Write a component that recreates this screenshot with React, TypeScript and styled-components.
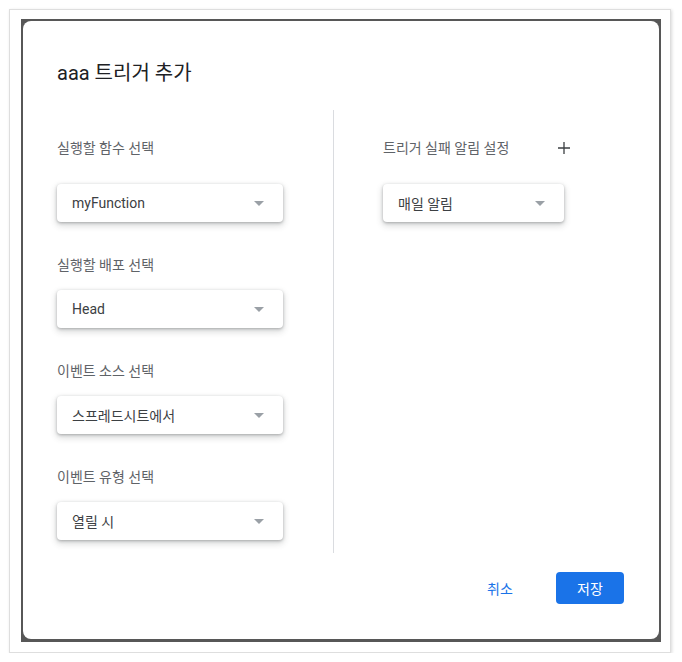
import React from 'react';
import styled, { createGlobalStyle } from 'styled-components';

const GlobalStyle = createGlobalStyle`
  body {
    margin: 0;
    background: #ffffff;
    font-family: Roboto, "Noto Sans CJK KR", sans-serif;
  }
`;

const Frame = styled.div`
  box-sizing: border-box;
  margin: 9px 0 0 9px;
  width: 662px;
  height: 644px;
  border: 1px solid #dedede;
  box-shadow: 1px 1px 3px rgba(0, 0, 0, 0.15);
  padding: 9px 9px 10px 11px;
`;

const Backdrop = styled.div`
  box-sizing: border-box;
  width: 640px;
  height: 623px;
  background: #575757;
  padding: 2px 2px 3px 2px;
`;

const Dialog = styled.div`
  box-sizing: border-box;
  height: 100%;
  background: #ffffff;
  border-radius: 8px;
  display: flex;
  flex-direction: column;
`;

const Title = styled.h1`
  margin: 0;
  padding: 40px 34px 0;
  font-size: 20px;
  line-height: 24px;
  font-weight: 400;
  color: #202124;
  font-family: Roboto, "Noto Sans CJK KR", sans-serif;
`;

const Body = styled.div`
  display: flex;
  margin-top: 25px;
  height: 443px;
`;

const LeftCol = styled.div`
  width: 276px;
  padding-left: 34px;
  padding-top: 28px;
  border-right: 1px solid #dadce0;
  display: flex;
  flex-direction: column;
`;

const RightCol = styled.div`
  padding-left: 49px;
  padding-top: 28px;
  display: flex;
  flex-direction: column;
`;

const Field = styled.div<{ $first?: boolean }>`
  display: flex;
  flex-direction: column;
  gap: ${(p) => (p.$first ? '26px' : '15px')};
  margin-top: ${(p) => (p.$first ? '0' : '33px')};
`;

const LabelRow = styled.div`
  display: flex;
  align-items: center;
  width: 188px;
  justify-content: space-between;
`;

const Label = styled.div`
  font-size: 14px;
  line-height: 20px;
  color: #5f6368;
  font-family: Roboto, "Noto Sans CJK KR", sans-serif;
`;

const Select = styled.div<{ $width: number }>`
  box-sizing: border-box;
  width: ${(p) => p.$width}px;
  height: 38px;
  border-radius: 4px;
  background: #fff;
  box-shadow: 0 1px 3px rgba(60, 64, 67, 0.35), 0 3px 6px 1px rgba(60, 64, 67, 0.18);
  display: flex;
  align-items: center;
  justify-content: space-between;
  padding: 0 19px 0 15px;
  font-size: 14px;
  color: #3c4043;
`;

const Caret = styled.span`
  width: 0;
  height: 0;
  border-left: 5px solid transparent;
  border-right: 5px solid transparent;
  border-top: 5px solid #9aa0a6;
`;

const Footer = styled.div`
  display: flex;
  justify-content: flex-end;
  gap: 22px;
  padding: 19px 35px 0 0;
`;

const Button = styled.button<{ $primary?: boolean }>`
  width: 68px;
  height: 32px;
  border: none;
  border-radius: 4px;
  font-family: Roboto, "Noto Sans CJK KR", sans-serif;
  font-size: 14px;
  font-weight: 400;
  cursor: pointer;
  background: ${(p) => (p.$primary ? '#1a73e8' : 'transparent')};
  color: ${(p) => (p.$primary ? '#ffffff' : '#1a73e8')};
`;

const PlusIcon = () => (
  <svg width="14" height="14" viewBox="0 0 14 14">
    <path d="M7 1v12M1 7h12" stroke="#3c4043" strokeWidth="1.3" fill="none" />
  </svg>
);

const fields = [
  { label: '실행할 함수 선택', value: 'myFunction' },
  { label: '실행할 배포 선택', value: 'Head' },
  { label: '이벤트 소스 선택', value: '스프레드시트에서' },
  { label: '이벤트 유형 선택', value: '열릴 시' },
];

const App: React.FC = () => {
  return (
    <>
      <GlobalStyle />
      <Frame>
        <Backdrop>
          <Dialog>
            <Title>aaa 트리거 추가</Title>
            <Body>
              <LeftCol>
                {fields.map((f, i) => (
                  <Field key={f.label} $first={i === 0}>
                    <Label>{f.label}</Label>
                    <Select $width={226}>
                      <span>{f.value}</span>
                      <Caret />
                    </Select>
                  </Field>
                ))}
              </LeftCol>
              <RightCol>
                <Field $first>
                  <LabelRow>
                    <Label>트리거 실패 알림 설정</Label>
                    <PlusIcon />
                  </LabelRow>
                  <Select $width={181}>
                    <span>매일 알림</span>
                    <Caret />
                  </Select>
                </Field>
              </RightCol>
            </Body>
            <Footer>
              <Button>취소</Button>
              <Button $primary>저장</Button>
            </Footer>
          </Dialog>
        </Backdrop>
      </Frame>
    </>
  );
};

export default App;
